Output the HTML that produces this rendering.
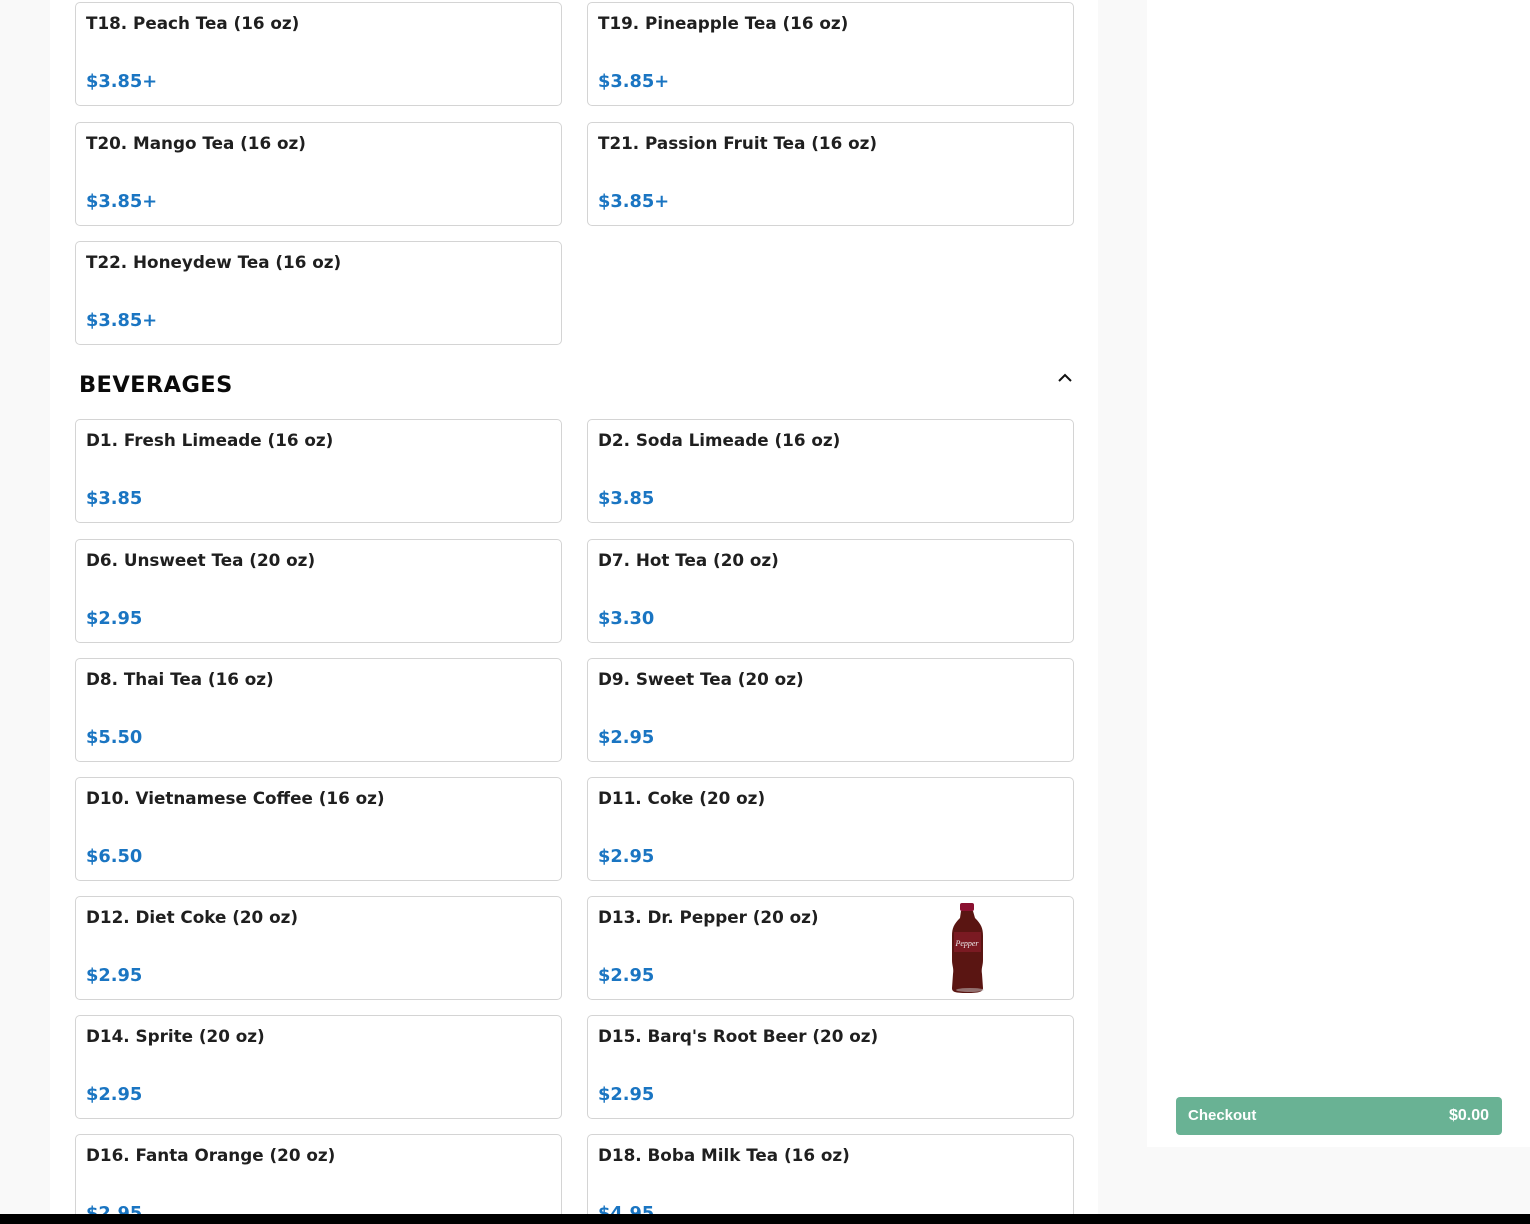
<!DOCTYPE html>
<html><head><meta charset="utf-8"><style>
*{margin:0;padding:0;box-sizing:border-box}
html,body{width:1530px;height:1224px;overflow:hidden;background:#f9f9f9;font-family:"DejaVu Sans","Liberation Sans",sans-serif}
#wrap{position:absolute;left:0;top:0;width:1530px;height:1214px;overflow:hidden}
#main{position:absolute;left:50px;top:0;width:1048px;height:1224px;background:#fff}
#side{position:absolute;left:1147px;top:0;width:383px;height:1147px;background:#fff}
.c{position:absolute;width:487px;height:104px;border:1px solid #d4d4d4;border-radius:5px;background:#fff}
.c .t{position:absolute;left:10px;top:10px;font-weight:bold;font-size:16.8px;color:#1f1f1f;white-space:nowrap}
.c .p{position:absolute;left:10px;top:68px;font-weight:bold;font-size:17.8px;color:#1a75c2;white-space:nowrap}
h2{position:absolute;left:79px;top:372px;font-size:22.5px;font-weight:bold;color:#0a0a0a;letter-spacing:0.4px}
#co{position:absolute;left:1176px;top:1097px;width:326px;height:38px;background:#69b294;border-radius:4px;color:#fff;font-family:"Liberation Sans",sans-serif;font-weight:bold;font-size:15px}
#co span{position:absolute;top:10px}
#bar{position:absolute;left:0;top:1214px;width:1530px;height:10px;background:#000}
</style></head><body>
<div id="wrap">
<div id="main"></div><div id="side"></div>

<div class="c" style="left:75px;top:2px"><div class="t">T18. Peach Tea (16 oz)</div><div class="p">$3.85+</div></div>
<div class="c" style="left:587px;top:2px"><div class="t">T19. Pineapple Tea (16 oz)</div><div class="p">$3.85+</div></div>
<div class="c" style="left:75px;top:122px"><div class="t">T20. Mango Tea (16 oz)</div><div class="p">$3.85+</div></div>
<div class="c" style="left:587px;top:122px"><div class="t">T21. Passion Fruit Tea (16 oz)</div><div class="p">$3.85+</div></div>
<div class="c" style="left:75px;top:241px"><div class="t">T22. Honeydew Tea (16 oz)</div><div class="p">$3.85+</div></div>

<h2>BEVERAGES</h2>
<svg style="position:absolute;left:1057px;top:372px" width="16" height="12" viewBox="0 0 16 12"><path d="M2 9 L8 3 L14 9" fill="none" stroke="#111" stroke-width="2"/></svg>

<div class="c" style="left:75px;top:419px"><div class="t">D1. Fresh Limeade (16 oz)</div><div class="p">$3.85</div></div>
<div class="c" style="left:587px;top:419px"><div class="t">D2. Soda Limeade (16 oz)</div><div class="p">$3.85</div></div>
<div class="c" style="left:75px;top:539px"><div class="t">D6. Unsweet Tea (20 oz)</div><div class="p">$2.95</div></div>
<div class="c" style="left:587px;top:539px"><div class="t">D7. Hot Tea (20 oz)</div><div class="p">$3.30</div></div>
<div class="c" style="left:75px;top:658px"><div class="t">D8. Thai Tea (16 oz)</div><div class="p">$5.50</div></div>
<div class="c" style="left:587px;top:658px"><div class="t">D9. Sweet Tea (20 oz)</div><div class="p">$2.95</div></div>
<div class="c" style="left:75px;top:777px"><div class="t">D10. Vietnamese Coffee (16 oz)</div><div class="p">$6.50</div></div>
<div class="c" style="left:587px;top:777px"><div class="t">D11. Coke (20 oz)</div><div class="p">$2.95</div></div>
<div class="c" style="left:75px;top:896px"><div class="t">D12. Diet Coke (20 oz)</div><div class="p">$2.95</div></div>
<div class="c" style="left:587px;top:896px"><div class="t">D13. Dr. Pepper (20 oz)</div><div class="p">$2.95</div>
<svg style="position:absolute;left:360px;top:5px" width="40" height="92" viewBox="0 0 40 92">
<rect x="12" y="1" width="14" height="8" rx="2" fill="#8a1030"/>
<path d="M13 9 L25 9 L27 16 C33 22 35 26 35 34 L35 58 C35 64 33 66 34 72 L35 86 C35 90 31 91 19 91 C7 91 4 90 4 86 L5 72 C6 66 4 64 4 58 L4 34 C4 26 6 22 12 16 Z" fill="#5a1512"/>
<path d="M6 30 L33 30 L33 50 L6 50 Z" fill="#7a1a22"/>
<text x="19" y="44" font-size="8" fill="#eee" text-anchor="middle" font-family="Liberation Serif" font-style="italic">Pepper</text>
<ellipse cx="22" cy="88" rx="14" ry="2" fill="#ccc" opacity=".5"/>
</svg></div>
<div class="c" style="left:75px;top:1015px"><div class="t">D14. Sprite (20 oz)</div><div class="p">$2.95</div></div>
<div class="c" style="left:587px;top:1015px"><div class="t">D15. Barq's Root Beer (20 oz)</div><div class="p">$2.95</div></div>
<div class="c" style="left:75px;top:1134px"><div class="t">D16. Fanta Orange (20 oz)</div><div class="p">$2.95</div></div>
<div class="c" style="left:587px;top:1134px"><div class="t">D18. Boba Milk Tea (16 oz)</div><div class="p">$4.95</div></div>

<div id="co"><span style="left:12px">Checkout</span><span style="right:13px;font-size:16px">$0.00</span></div>
</div>
<div id="bar"></div>
</body></html>
